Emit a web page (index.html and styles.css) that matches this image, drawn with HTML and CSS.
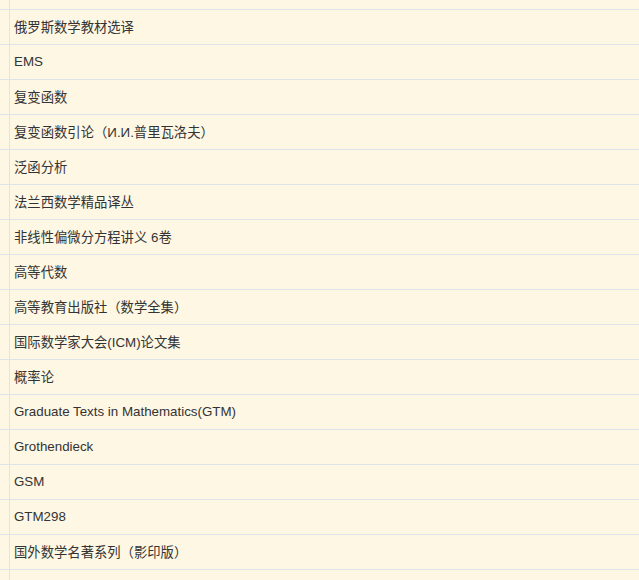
FILE: index.html
```html
<!DOCTYPE html>
<html lang="zh">
<head>
<meta charset="utf-8">
<link rel="stylesheet" href="styles.css">
</head>
<body>
<div class="list">
  <div class="row row-top"><div class="gutter"></div><div class="cell"></div></div>
  <div class="row"><div class="gutter"></div><div class="cell">俄罗斯数学教材选译</div></div>
  <div class="row"><div class="gutter"></div><div class="cell">EMS</div></div>
  <div class="row"><div class="gutter"></div><div class="cell">复变函数</div></div>
  <div class="row"><div class="gutter"></div><div class="cell">复变函数引论（И.И.普里瓦洛夫）</div></div>
  <div class="row"><div class="gutter"></div><div class="cell">泛函分析</div></div>
  <div class="row"><div class="gutter"></div><div class="cell">法兰西数学精品译丛</div></div>
  <div class="row"><div class="gutter"></div><div class="cell">非线性偏微分方程讲义 6卷</div></div>
  <div class="row"><div class="gutter"></div><div class="cell">高等代数</div></div>
  <div class="row"><div class="gutter"></div><div class="cell">高等教育出版社（数学全集）</div></div>
  <div class="row"><div class="gutter"></div><div class="cell">国际数学家大会(ICM)论文集</div></div>
  <div class="row"><div class="gutter"></div><div class="cell">概率论</div></div>
  <div class="row"><div class="gutter"></div><div class="cell">Graduate Texts in Mathematics(GTM)</div></div>
  <div class="row"><div class="gutter"></div><div class="cell">Grothendieck</div></div>
  <div class="row"><div class="gutter"></div><div class="cell">GSM</div></div>
  <div class="row"><div class="gutter"></div><div class="cell">GTM298</div></div>
  <div class="row"><div class="gutter"></div><div class="cell">国外数学名著系列（影印版）</div></div>
  <div class="row"><div class="gutter"></div><div class="cell"></div></div>
</div>
</body>
</html>
```
FILE: styles.css
```css
html, body {
  margin: 0;
  padding: 0;
  background: #fef7e4;
  overflow: hidden;
}
.list {
  display: flex;
  flex-direction: column;
  font-family: "Liberation Sans", "Noto Sans CJK SC", sans-serif;
  font-size: 13.33px;
  color: #333;
}
.row {
  display: flex;
  height: 35px;
  box-sizing: border-box;
  border-bottom: 1px solid #dfe3ea;
}
.row-top {
  height: 10px;
}
.gutter {
  width: 9px;
  border-right: 1px solid #dfe3ea;
  flex: none;
}
.cell {
  flex: 1;
  display: flex;
  align-items: center;
  padding-left: 4px;
  padding-bottom: 1px;
  white-space: nowrap;
}
```
